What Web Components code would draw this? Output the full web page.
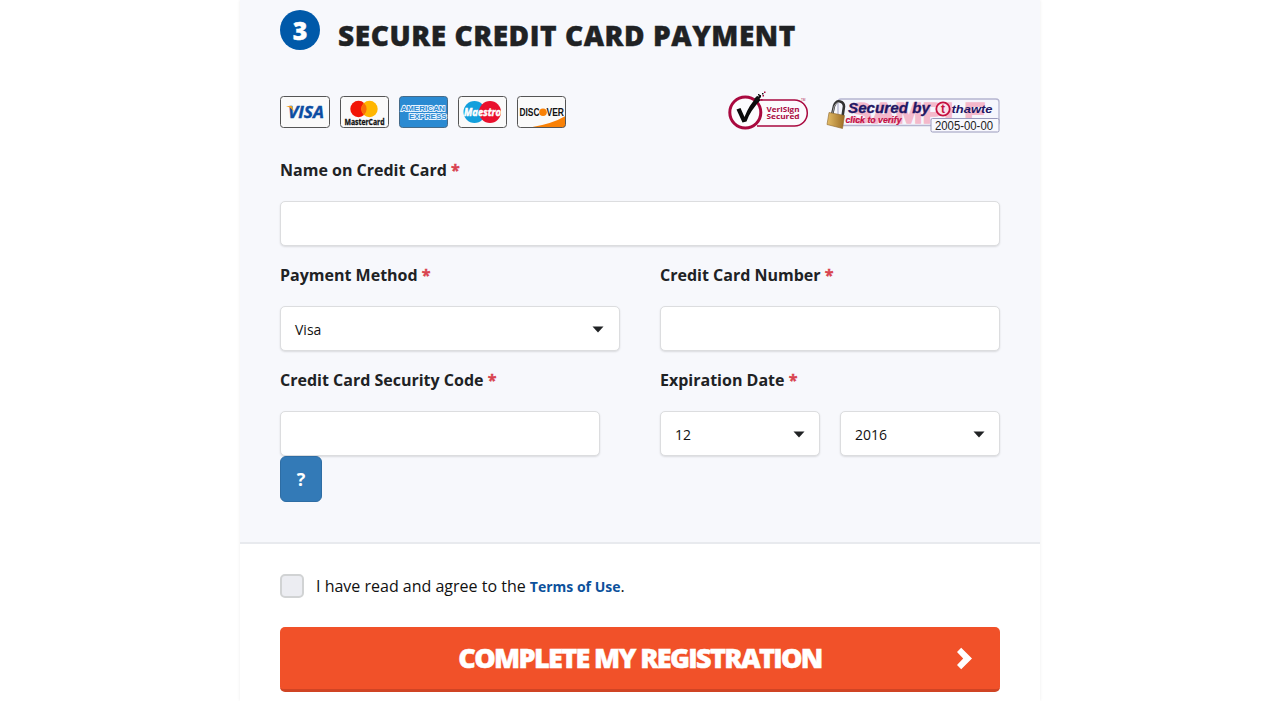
<!DOCTYPE html>
<html lang="en">
<head>
<meta charset="utf-8">
<title>Secure Credit Card Payment</title>
<style>
body{margin:0;background:#fff;color:#202224;font-family:"Open Sans",sans-serif;font-size:16px;height:701px;overflow:hidden}
</style>
</head>
<body>
<payment-page></payment-page>
<script>
const define = (name, html) => {
  const tpl = document.createElement('template');
  tpl.innerHTML = html;
  customElements.define(name, class extends HTMLElement {
    constructor() {
      super();
      this.attachShadow({mode: 'open'}).append(tpl.content.cloneNode(true));
    }
  });
};

define('step-heading', `
<style>
:host{display:flex;gap:18px;height:60px;padding-top:10px;box-sizing:border-box}
.n{width:40px;height:40px;border-radius:50%;background:#0059a9;color:#fff;font-weight:800;font-size:25px;line-height:40px;text-align:center;-webkit-text-stroke:.4px}
h2{margin:6px 0 0;font-size:28px;font-weight:800;line-height:38px;letter-spacing:.56px;white-space:nowrap;-webkit-text-stroke:.4px}
</style>
<div class="n"><slot name="number"></slot></div><h2><slot></slot></h2>`);

define('card-logos', `
<style>
:host{display:flex;gap:9px}
svg{display:block;height:33px}
text{font-family:"Liberation Sans",sans-serif}
</style>
<svg width="51" height="33" viewBox="0 0 51 33">
  <rect x=".5" y=".5" width="49" height="31" rx="3" fill="#fafafa" stroke="#555"/>
  <text x="8" y="22" font-family="Open Sans" style="font-family:'Open Sans',sans-serif" font-size="16.500" font-weight="700" font-style="italic" fill="#0c4da2" stroke="#0c4da2" stroke-width=".4" textLength="36" lengthAdjust="spacingAndGlyphs">VISA</text>
  <path d="M6 10h6l2 6q-2.500-4.500-8-6z" fill="#f0a01f"/>
</svg>
<svg width="50" height="33" viewBox="0 0 50 33">
  <rect x=".5" y=".5" width="48" height="31" rx="3" fill="#fafafa" stroke="#555"/>
  <circle cx="18.500" cy="13" r="8.200" fill="#f21505"/><circle cx="29.500" cy="13" r="8.200" fill="#ffb600"/>
  <path d="M24 7a8.200 8.200 0 0 1 0 12a8.200 8.200 0 0 1 0-12z" fill="#fa6c08"/>
  <text x="4.500" y="28.700" style="font-family:'Open Sans',sans-serif" font-size="8.500" font-weight="700" fill="#111" stroke="#111" stroke-width=".3" textLength="40" lengthAdjust="spacingAndGlyphs">MasterCard</text>
</svg>
<svg width="50" height="33" viewBox="0 0 50 33">
  <rect x=".5" y=".5" width="48" height="31" rx="3" fill="#2a8ad2" stroke="#456a88"/>
  <g font-size="8" font-weight="700" fill="#2a8ad2" stroke="#e8f4ff" stroke-width="1.800" paint-order="stroke">
  <text x="2" y="15.300" textLength="44" lengthAdjust="spacingAndGlyphs">AMERICAN</text>
  <text x="10" y="22.800" textLength="37.500" lengthAdjust="spacingAndGlyphs">EXPRESS</text></g>
</svg>
<svg width="50" height="33" viewBox="0 0 50 33">
  <rect x=".5" y=".5" width="48" height="31" rx="3" fill="#fafafa" stroke="#555"/>
  <circle cx="16.500" cy="16" r="11" fill="#139fdc"/><circle cx="32" cy="16" r="11" fill="#e9102d"/>
  <text x="6" y="19.800" style="font-family:'Open Sans',sans-serif" font-size="11" font-weight="700" font-style="italic" fill="#fff" stroke="#fff" stroke-width=".5" textLength="37" lengthAdjust="spacingAndGlyphs">Maestro</text>
</svg>
<svg width="50" height="33" viewBox="0 0 50 33">
  <rect x=".5" y=".5" width="48" height="31" rx="3" fill="#fafafa"/>
  <path d="M13 31.500Q35 28 48.500 20v8.500q0 3-3 3z" fill="#f98106"/>
  <rect x=".5" y=".5" width="48" height="31" rx="3" fill="none" stroke="#555"/>
  <text x="2.500" y="20" font-size="10.500" font-weight="700" fill="#111" textLength="20" lengthAdjust="spacingAndGlyphs">DISC</text>
  <circle cx="26" cy="16.300" r="3.800" fill="#f98106"/>
  <text x="29.500" y="20" font-size="10.500" font-weight="700" fill="#111" textLength="17.500" lengthAdjust="spacingAndGlyphs">VER</text>
</svg>`);

define('trust-seals', `
<style>
:host{display:flex;gap:17px}
svg{display:block}
</style>
<svg width="82" height="44" viewBox="-1 -1 82 44">
  <path d="M29 9H66.500a12.800 13 0 0 1 0 26H29" fill="#fbfafd" stroke="#a9093f" stroke-width="1.500"/>
  <circle cx="17.300" cy="21.500" r="15.500" fill="#fcfcfe" stroke="#a9093f" stroke-width="3"/>
  <path d="M8.500 18.500l4-1.500 4 9Q21 14 29 6l3.500 3Q22 20 18.500 30.500l-4 1z" fill="#0a0a0a"/>
  <path d="M26 8l3-3 4 1-4 5zM31 4h2v2h-2zM34 2h1.500v1.500H34zM30 3h1.500v1.500H30z" fill="#111"/>
  <path d="M34.500 4h1.500v1.500h-1.500zM36 .500h1.500V2H36zM33 8h1.500v1.500H33z" fill="#a9093f"/>
  <g font-family="Open Sans,sans-serif" font-weight="700" font-size="7" fill="#a9093f">
  <text x="38.500" y="21.200" textLength="33" lengthAdjust="spacingAndGlyphs">VeriSign</text>
  <text x="38.500" y="27.800" textLength="33" lengthAdjust="spacingAndGlyphs">Secured</text>
  <text x="73" y="10" font-size="3" font-weight="400">TM</text></g>
</svg>
<svg width="174" height="44" viewBox="0 -1 174 44">
  <defs><linearGradient id="b" x2="1"><stop stop-color="#e4bd68"/><stop offset="1" stop-color="#9b6c24"/></linearGradient></defs>
  <rect x="12" y="8" width="161" height="26.500" rx="3" fill="#f5f6fd" stroke="#b5b5d0" stroke-width="1.300"/>
  <text x="24" y="31.500" font-family="Liberation Sans,sans-serif" font-weight="700" font-size="30" fill="#f4b9cb" stroke="#f4b9cb" stroke-width="1.500" textLength="136" lengthAdjust="spacingAndGlyphs">SAMPLE</text>
  <path d="M6 24l2-9q2-5.500 6-4.500t4 5l-1.500 10" fill="none" stroke="#333" stroke-width="2.600"/>
  <path d="M6.300 23l2-8q2-4 5-3.500" fill="none" stroke="#bbb" stroke-width=".8"/>
  <path d="M3 21.500l15.500 3-2 13-15.500-4z" fill="url(#b)" stroke="#8b652c" stroke-width=".6"/>
  <g font-family="Liberation Sans,sans-serif" font-weight="700" font-style="italic">
  <text x="22" y="21.500" font-size="14" fill="#211764" stroke="#211764" stroke-width=".3" textLength="82" lengthAdjust="spacingAndGlyphs">Secured by</text>
  <text x="19.500" y="31.500" font-size="9" fill="#c20c43" stroke="#c20c43" stroke-width=".2" textLength="56" lengthAdjust="spacingAndGlyphs">click to verify</text>
  <text x="125.500" y="22" font-size="11.500" fill="#211764" textLength="41" lengthAdjust="spacingAndGlyphs">thawte</text></g>
  <circle cx="117" cy="18" r="6.700" fill="#f9e3ea" stroke="#c5103f" stroke-width="1.800"/>
  <text x="115" y="22" font-family="Liberation Sans,sans-serif" font-weight="700" font-size="12" fill="#c5103f">t</text>
  <rect x="105" y="27.500" width="68" height="13.500" rx="1.500" fill="#f8f8fe" stroke="#9a9abc"/>
  <text x="109" y="38.500" font-family="Liberation Sans,sans-serif" font-size="12" fill="#222" textLength="58" lengthAdjust="spacingAndGlyphs">2005-00-00</text>
</svg>`);

define('form-field', `
<style>
:host{display:block;height:105px}
label{display:block;font-weight:700;line-height:24px;height:43px;white-space:nowrap}
i{font-style:normal;color:#d9434f;-webkit-text-stroke:.4px}
.row{display:flex;gap:20px}
</style>
<label><slot name="label"></slot> <i>*</i></label>
<div class="row"><slot></slot></div>`);

define('text-box', `
<style>
:host{display:block;flex:1;height:45px}
input{display:block;width:100%;height:45px;box-sizing:border-box;border:1px solid #dcdddf;border-radius:5px;background:#fff;box-shadow:0 1px 2px rgba(0,0,0,.12);padding:0 14px;font:14px "Open Sans",sans-serif;outline:0}
</style><input type="text">`);

define('select-box', `
<style>
:host{flex:1;display:flex;align-items:center;justify-content:space-between;height:45px;box-sizing:border-box;border:1px solid #dcdddf;border-radius:5px;background:#fff;box-shadow:0 1px 2px rgba(0,0,0,.12);padding:0 14px;font-size:14px;line-height:20px;color:#111}
:host(.wide){padding-right:15px}
span{padding-top:2px}
svg{display:block}
</style><span><slot></slot></span><svg width="12" height="8"><path d="M.5 1.500h11L6 7.500z" fill="#202224"/></svg>`);

define('help-button', `
<style>
:host{display:block}
button{display:block;width:42px;height:46px;padding:0;box-sizing:border-box;border:1px solid #2e6da4;border-radius:6px;background:#337ab7;color:#fff;font:700 18px/44px "Open Sans",sans-serif}
</style><button><slot></slot></button>`);

define('terms-check', `
<style>
:host{display:flex;align-items:center;gap:12px;height:24px;line-height:24px;white-space:nowrap;color:#111}
.box{width:24px;height:24px;box-sizing:border-box;border:2px solid #d1d3d4;border-radius:5px;background:#ecedf2}
a{font-size:14px;font-weight:700;color:#0c519c}
</style><span class="box"></span><span><slot></slot> <a><slot name="link"></slot></a>.</span>`);

define('submit-button', `
<style>
:host{display:block}
button{display:grid;grid-template-columns:1fr auto 1fr;align-items:center;width:100%;height:65px;box-sizing:border-box;border:0;border-bottom:3px solid #d04424;border-radius:5px;background:#f15129;color:#fff;padding:0 27px;font:800 27px/36px "Open Sans",sans-serif;letter-spacing:-1.640px;white-space:nowrap}
.t{grid-column:2;-webkit-text-stroke:.5px}
svg{justify-self:end}
</style><button><span class="t"><slot></slot></span><svg width="17" height="23"><path d="M1 4.900L5.200.800 16 11.500 5.200 22.200 1 18.100 7.200 11.500z" fill="#fff"/></svg></button>`);

define('payment-page', `
<style>
:host{display:block;width:800px;height:701px;margin:0 auto;box-shadow:0 0 3px rgba(0,0,0,.08)}
section{height:544px;box-sizing:border-box;background:#f7f8fc;border-bottom:2px solid #e8eaee;padding:0 40px}
.brands{display:flex;justify-content:space-between;height:69px;margin-top:29px}
card-logos{margin-top:7px}
trust-seals{margin-top:.5px}
.grid{display:grid;grid-template-columns:340px 340px;column-gap:40px}
.full{grid-column:1/3}
.cvv{padding-right:20px}
footer{padding:30px 40px 0}
submit-button{margin-top:29px}
</style>
<section>
<step-heading><span slot="number">3</span>SECURE CREDIT CARD PAYMENT</step-heading>
<div class="brands"><card-logos></card-logos><trust-seals></trust-seals></div>
<div class="grid">
<form-field class="full"><span slot="label">Name on Credit Card</span><text-box></text-box></form-field>
<form-field><span slot="label">Payment Method</span><select-box class="wide">Visa</select-box></form-field>
<form-field><span slot="label">Credit Card Number</span><text-box></text-box></form-field>
<form-field class="cvv" style="height:88px"><span slot="label">Credit Card Security Code</span><text-box></text-box></form-field>
<form-field style="height:88px"><span slot="label">Expiration Date</span><select-box>12</select-box><select-box>2016</select-box></form-field>
<help-button>?</help-button>
</div>
</section>
<footer>
<terms-check>I have read and agree to the<span slot="link">Terms of Use</span></terms-check>
<submit-button>COMPLETE MY REGISTRATION</submit-button>
</footer>`);
</script>
</body>
</html>
